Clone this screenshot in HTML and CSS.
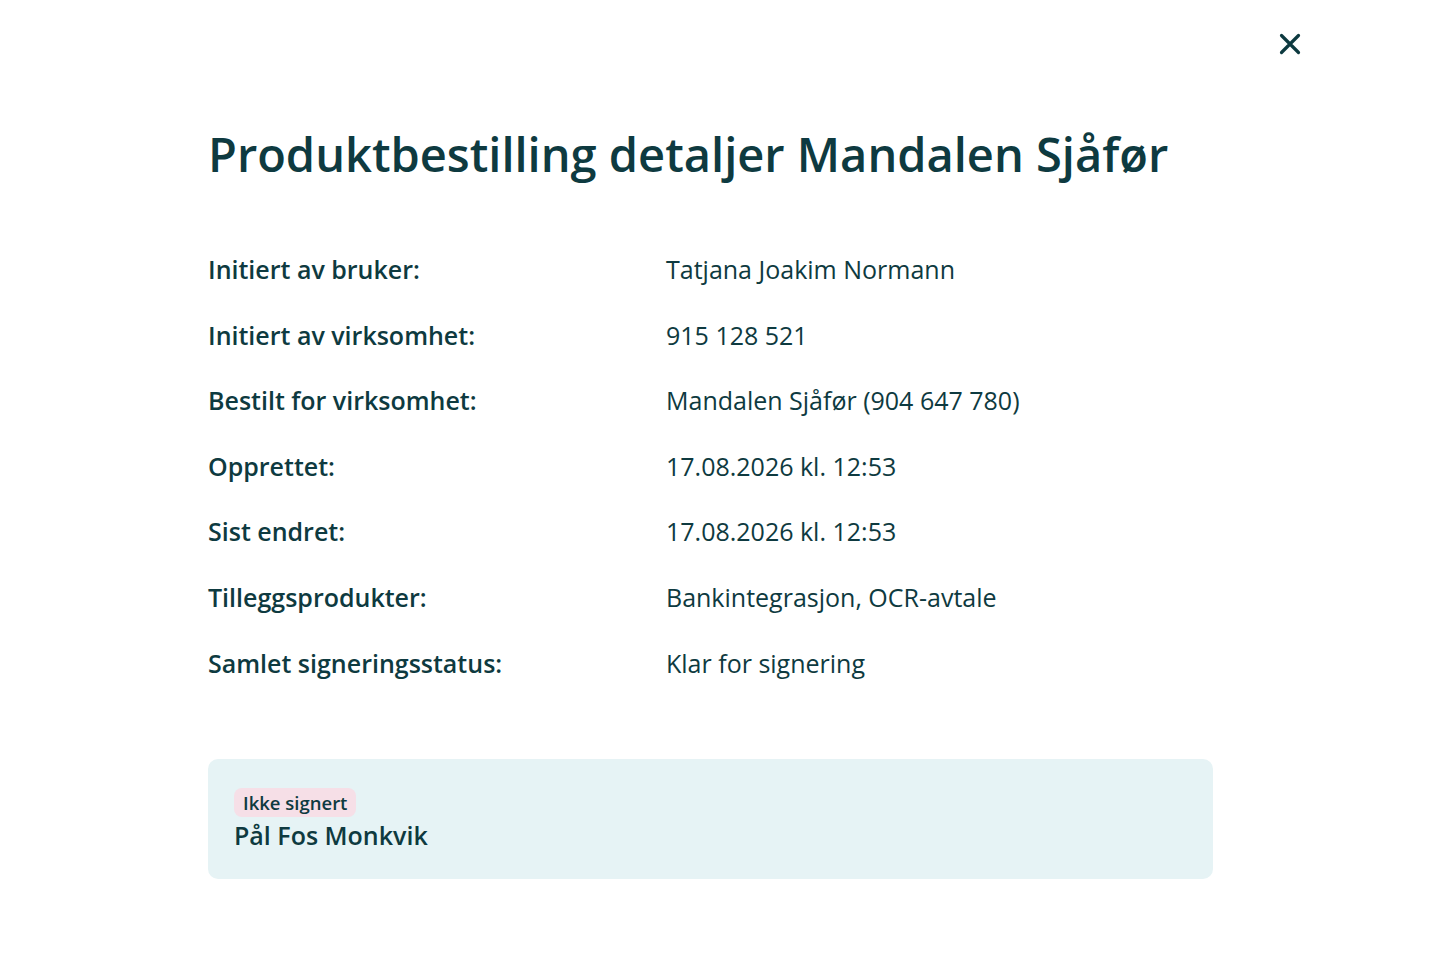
FILE: index.html
```html
<!DOCTYPE html>
<html lang="no">
<head>
<meta charset="utf-8">
<title>Produktbestilling detaljer</title>
<link rel="stylesheet" href="styles.css">
</head>
<body>
<div class="page">
  <button class="close" aria-label="Lukk">
    <svg width="22" height="22" viewBox="0 0 22 22"><path d="M2.5 2.5 L19.5 19.5 M19.5 2.5 L2.5 19.5" stroke="#0d3a40" stroke-width="3.2" stroke-linecap="round" fill="none"/></svg>
  </button>
  <main class="content">
    <h1 class="title">Produktbestilling detaljer Mandalen Sjåfør</h1>
    <dl class="details">
      <div class="row"><dt>Initiert av bruker:</dt><dd>Tatjana Joakim Normann</dd></div>
      <div class="row"><dt>Initiert av virksomhet:</dt><dd>915 128 521</dd></div>
      <div class="row"><dt>Bestilt for virksomhet:</dt><dd>Mandalen Sjåfør (904 647 780)</dd></div>
      <div class="row"><dt>Opprettet:</dt><dd>17.08.2026 kl. 12:53</dd></div>
      <div class="row"><dt>Sist endret:</dt><dd>17.08.2026 kl. 12:53</dd></div>
      <div class="row"><dt>Tilleggsprodukter:</dt><dd>Bankintegrasjon, OCR-avtale</dd></div>
      <div class="row"><dt>Samlet signeringsstatus:</dt><dd>Klar for signering</dd></div>
    </dl>
    <section class="signer">
      <span class="badge">Ikke signert</span>
      <div class="signer-name">Pål Fos Monkvik</div>
    </section>
  </main>
</div>
</body>
</html>
```
FILE: styles.css
```css
* { box-sizing: border-box; }
html, body { margin: 0; padding: 0; background: #ffffff; }
body {
  font-family: "Open Sans", "Noto Sans", sans-serif;
  color: #0e3a40;
}
.page {
  position: relative;
  width: 1440px;
  height: 960px;
}
.close {
  position: absolute;
  top: 33px;
  left: 1279px;
  width: 22px;
  height: 22px;
  padding: 0;
  border: 0;
  background: none;
  cursor: pointer;
}
.close svg { display: block; }
.content {
  width: 1005px;
  margin-left: 208px;
  padding-top: 118px;
}
.title {
  margin: 0;
  font-size: 47px;
  font-weight: 600;
  line-height: 72px;
  letter-spacing: 0;
}
.details {
  margin: 62px 0 0 0;
  padding: 0;
}
.row {
  display: grid;
  grid-template-columns: 458px 1fr;
  height: 65.6px;
  align-items: start;
  font-size: 25px;
  line-height: 34px;
}
.row dt { font-weight: 600; margin: 0; }
.row dd { font-weight: 400; margin: 0; }
.signer {
  margin-top: 48px;
  background: #e6f3f5;
  border-radius: 10px;
  height: 120px;
  padding: 29px 26px 0 26px;
}
.badge {
  display: inline-block;
  background: #f6dfe7;
  border-radius: 8px;
  font-size: 18.5px;
  font-weight: 600;
  line-height: 29px;
  padding: 0 9px;
}
.signer-name {
  font-size: 25px;
  font-weight: 600;
  line-height: 34px;
  margin-top: 1px;
}
```
